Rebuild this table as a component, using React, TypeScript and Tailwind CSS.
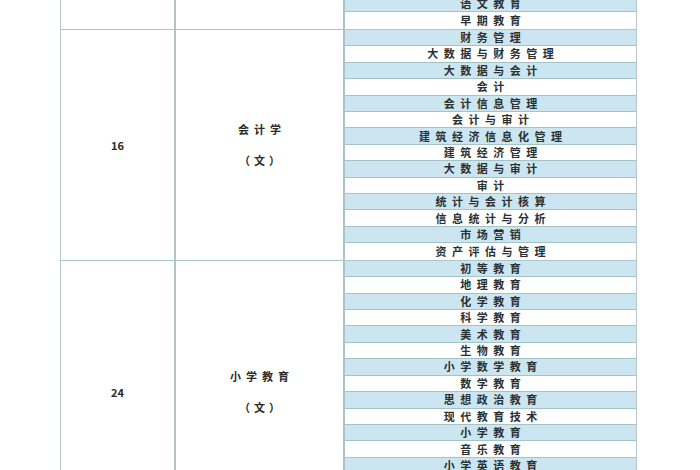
import React from "react";

interface Group {
  id: string;
  num?: string;
  major?: string;
  majors: string[];
  // rows of the group that run past the bottom of the shot
  hiddenRows?: number;
}

const groups: Group[] = [
  { id: "top", majors: ["语文教育", "早期教育"] },
  {
    id: "g16",
    num: "16",
    major: "会计学",
    majors: [
      "财务管理",
      "大数据与财务管理",
      "大数据与会计",
      "会计",
      "会计信息管理",
      "会计与审计",
      "建筑经济信息化管理",
      "建筑经济管理",
      "大数据与审计",
      "审计",
      "统计与会计核算",
      "信息统计与分析",
      "市场营销",
      "资产评估与管理",
    ],
  },
  {
    id: "g24",
    num: "24",
    major: "小学教育",
    majors: [
      "初等教育",
      "地理教育",
      "化学教育",
      "科学教育",
      "美术教育",
      "生物教育",
      "小学数学教育",
      "数学教育",
      "思想政治教育",
      "现代教育技术",
      "小学教育",
      "音乐教育",
      "小学英语教育",
    ],
    hiddenRows: 3,
  },
];

const font = "[font-family:'Noto_Sans_CJK_SC','Noto_Sans',sans-serif]";

const App: React.FC = () => {
  // alternate colours run across the whole list, starting with blue
  let rowIndex = 0;

  return (
    <div className={`w-[700px] h-[470px] overflow-hidden bg-white ${font}`}>
      <div className="ml-[60px] w-[577px] -mt-[4px] border-l border-r border-[#b9c6c7]">
        {groups.map((g) => (
          <div key={g.id} className="flex border-b border-[#a8c8cb]">
            <div className="w-[115px] shrink-0 border-r-2 border-[#b4c4c6] flex items-center justify-center">
              {g.num && <span className="text-[11px] font-bold text-[#2a2a2a]">{g.num}</span>}
            </div>
            <div className="w-[169px] shrink-0 border-r-2 border-[#a8c4c8] flex flex-col items-center justify-center gap-[20px]">
              {g.major && (
                <>
                  <span className="text-[11px] font-bold text-[#2a2a2a] tracking-[5px] pl-[5px] leading-none">{g.major}</span>
                  <span className="text-[11px] font-bold text-[#2a2a2a] tracking-[4px] pl-[4px] leading-none">（文）</span>
                </>
              )}
            </div>
            <div className="flex-1 flex flex-col">
              {g.majors.map((m, i) => {
                const blue = rowIndex++ % 2 === 0;
                return (
                  <div
                    key={m + i}
                    className={`h-[16.43px] flex items-center justify-center border-b border-[#a3c3c7] last:border-b-0 ${
                      blue ? "bg-[#cbe5f1]" : "bg-white"
                    }`}
                  >
                    <span className="text-[11px] font-bold text-[#2a2f31] tracking-[5.5px] pl-[5.5px] leading-none">
                      {m}
                    </span>
                  </div>
                );
              })}
              {Array.from({ length: g.hiddenRows ?? 0 }).map((_, i) => (
                <div
                  key={"h" + i}
                  className={`h-[16.43px] border-b border-[#a3c3c7] ${
                    rowIndex++ % 2 === 0 ? "bg-[#cbe5f1]" : "bg-white"
                  }`}
                />
              ))}
            </div>
          </div>
        ))}
      </div>
    </div>
  );
};

export default App;
